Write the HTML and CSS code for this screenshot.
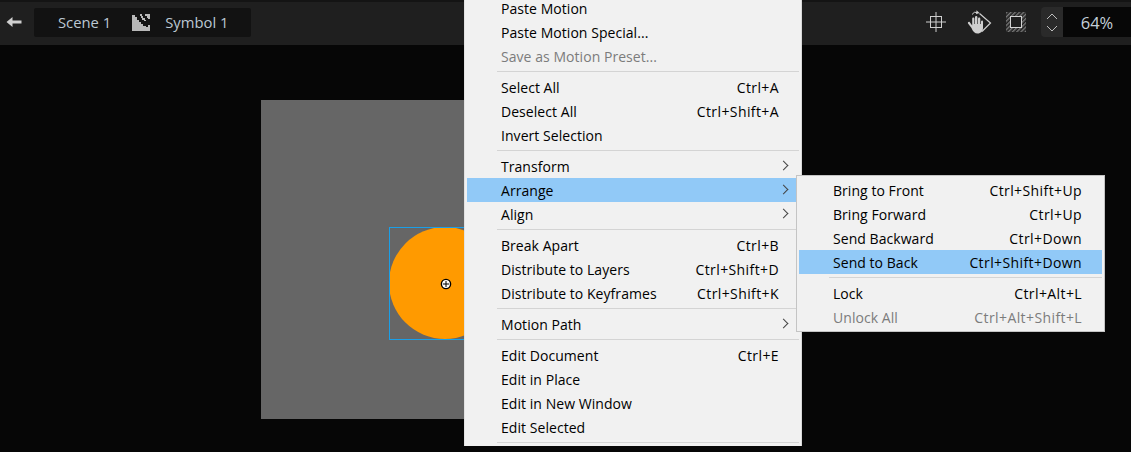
FILE: index.html
```html
<!DOCTYPE html>
<html lang="en">
<head>
<meta charset="utf-8">
<title>Symbol 1</title>
<link rel="stylesheet" href="styles.css">
</head>
<body>
<div class="app">
  <header class="topbar">
    <svg class="back" width="16" height="12" viewBox="0 0 16 12"><path d="M0.5 6 L6.5 1 V4.6 H15.5 V7.4 H6.5 V11 Z" fill="#cfcfcf"/></svg>
    <nav class="crumbs">
      <span class="crumb">Scene 1</span>
      <svg class="symbol" width="18" height="18" viewBox="0 0 18 18"><path d="M0 2 H3 V4 H5 V7 H7 V9 H9 V11 H11 V13 H14 V14 H16 V12 H18 V18 H0 Z" fill="#b8b8b8"/><path d="M8 1 H10 V3 H11 V5 H13 V7 H14 V8 H12 V7 H10 V5 H9 V3 H8 Z M13 1 H18 V6 H16 V5 H15 V3 H13 Z" fill="#b8b8b8"/></svg>
      <span class="crumb">Symbol 1</span>
    </nav>
    <div class="tools">
      <svg width="20" height="20" viewBox="0 0 20 20" fill="none" stroke="#cfcfcf"><rect x="4.5" y="4.5" width="11" height="11"/><path d="M10 0V20M0 10H20"/></svg>
      <svg class="hand" width="26" height="24" viewBox="0 0 26 24"><path d="M13.5 3.5 L24.5 13 L16 21.5" fill="none" stroke="#cfcfcf" stroke-width="1.2"/><path d="M2 13.5 L5.5 18 C6.5 21.5 9 23.5 11.5 23.5 C15 23.5 17 21 17 18 V11.5 C17 10 15.2 10 15 11.5 V14 L14.3 14 V8.5 C14.2 7 12.2 7 12 8.5 V14 H11.4 V7 C11.2 5.5 9.2 5.5 9 7 V14 H8.4 V8.5 C8.3 7 6.3 7 6.2 8.5 V15.5 L3.8 12.2 C3 11.2 1.4 12.3 2 13.5 Z" fill="#cfcfcf"/><path d="M6 4.5 A4.5 4.5 0 0 1 11.5 2.5" fill="none" stroke="#cfcfcf"/><path d="M10.5 0.3 L13.5 3 L10 4.3 Z" fill="#cfcfcf"/></svg>
      <svg width="20" height="20" viewBox="0 0 20 20"><defs><pattern id="hatch" width="3" height="3" patternUnits="userSpaceOnUse" patternTransform="rotate(-45)"><rect width="3" height="1.4" fill="#7a7a7a"/></pattern></defs><rect width="20" height="20" fill="url(#hatch)"/><rect x="4.5" y="4.5" width="11" height="11" fill="#1f1f1f" stroke="#d4d4d4"/></svg>
      <div class="zoomer">
        <div class="stepper">
          <svg width="12" height="7" viewBox="0 0 12 7" fill="none" stroke="#bdbdbd"><path d="M1 6 L6 1 L11 6"/></svg>
          <svg width="12" height="7" viewBox="0 0 12 7" fill="none" stroke="#bdbdbd"><path d="M1 1 L6 6 L11 1"/></svg>
        </div>
        <div class="zoomval">64%</div>
      </div>
    </div>
  </header>
  <main class="canvas">
    <div class="stage"></div>
    <div class="circle"></div>
    <div class="selbox"></div>
    <svg class="reg" width="12" height="12" viewBox="0 0 12 12"><circle cx="6" cy="6" r="4.6" fill="#fff" stroke="#000" stroke-width="1.4"/><path d="M6 3V9M3 6H9" stroke="#000"/></svg>
  </main>

  <div class="menu main-menu">
    <div class="item"><span>Paste Motion</span></div>
    <div class="item"><span>Paste Motion Special...</span></div>
    <div class="item off"><span>Save as Motion Preset...</span></div>
    <div class="sep"></div>
    <div class="item"><span>Select All</span><span class="key">Ctrl+A</span></div>
    <div class="item"><span>Deselect All</span><span class="key">Ctrl+Shift+A</span></div>
    <div class="item"><span>Invert Selection</span></div>
    <div class="sep"></div>
    <div class="item sub"><span>Transform</span></div>
    <div class="item sub hot"><span>Arrange</span></div>
    <div class="item sub"><span>Align</span></div>
    <div class="sep"></div>
    <div class="item"><span>Break Apart</span><span class="key">Ctrl+B</span></div>
    <div class="item"><span>Distribute to Layers</span><span class="key">Ctrl+Shift+D</span></div>
    <div class="item"><span>Distribute to Keyframes</span><span class="key">Ctrl+Shift+K</span></div>
    <div class="sep"></div>
    <div class="item sub"><span>Motion Path</span></div>
    <div class="sep"></div>
    <div class="item"><span>Edit Document</span><span class="key">Ctrl+E</span></div>
    <div class="item"><span>Edit in Place</span></div>
    <div class="item"><span>Edit in New Window</span></div>
    <div class="item"><span>Edit Selected</span></div>
    <div class="sep"></div>
  </div>

  <div class="menu sub-menu">
    <div class="item"><span>Bring to Front</span><span class="key">Ctrl+Shift+Up</span></div>
    <div class="item"><span>Bring Forward</span><span class="key">Ctrl+Up</span></div>
    <div class="item"><span>Send Backward</span><span class="key">Ctrl+Down</span></div>
    <div class="item hot"><span>Send to Back</span><span class="key">Ctrl+Shift+Down</span></div>
    <div class="sep"></div>
    <div class="item"><span>Lock</span><span class="key">Ctrl+Alt+L</span></div>
    <div class="item off"><span>Unlock All</span><span class="key">Ctrl+Alt+Shift+L</span></div>
  </div>
</div>
</body>
</html>
```

FILE: styles.css
```css
* { box-sizing: border-box; }
html, body { margin: 0; padding: 0; }
body { width: 1131px; height: 452px; overflow: hidden; background: #060606; font-family: "Open Sans", "Noto Sans", sans-serif; }
.app { position: relative; width: 1131px; height: 452px; overflow: hidden; display: flex; flex-direction: column; }

.topbar { height: 45px; flex: none; background: #1f1f1f; border-top: 2px solid #141414; display: flex; align-items: center; padding-left: 6px; padding-bottom: 3px; }
.back { flex: none; margin-right: 12px; }
.crumbs { width: 217px; height: 29px; background: #121212; border-radius: 2px; display: flex; align-items: center; padding-left: 24px; gap: 21px; }
.crumb { font-size: 14.8px; color: #bcc8d2; }
.symbol { flex: none; margin: 0 -6px 0 0; }
.tools { margin-left: auto; display: flex; align-items: center; }
.tools > svg:nth-child(1) { margin-right: 20px; }
.tools > .hand { margin-right: 14px; }
.tools > svg:nth-child(3) { margin-right: 15px; }
.zoomer { display: flex; height: 30px; }
.stepper { width: 22px; background: #2a2a2a; border-radius: 4px 0 0 4px; display: flex; flex-direction: column; align-items: center; justify-content: space-around; padding: 3px 0; }
.zoomval { width: 68px; background: #070707; color: #c4d0da; font-size: 16.5px; display: flex; align-items: center; justify-content: center; }

.canvas { flex: 1; position: relative; background: #060606; }
.stage { position: absolute; left: 261px; top: 55px; width: 300px; height: 319px; background: #666; }
.circle { position: absolute; left: 389px; top: 182px; width: 112px; height: 112px; border-radius: 50%; background: #ff9a00; }
.selbox { position: absolute; left: 389px; top: 182px; width: 112px; height: 113px; border: 1px solid #1a9fe8; }
.reg { position: absolute; left: 439.5px; top: 232.5px; }

.menu { position: absolute; background: #f1f1f1; color: #000; font-size: 14px; letter-spacing: 0.05px; }
.main-menu { left: 464px; top: -4px; width: 338px; padding: 0 2px; border-left: 1px solid #e2e2e2; border-right: 1px solid #d8d8d8; }
.sub-menu { left: 796px; top: 175px; width: 309px; height: 157px; padding: 2px 2px 0; border: 1px solid #c4c4c4; }
.item { height: 24px; display: flex; align-items: center; justify-content: space-between; padding: 0 20px 0 34px; white-space: nowrap; position: relative; }
.key { letter-spacing: 0.4px; }
.item.off { color: #7c7c7c; }
.item.hot { background: #91c9f7; }
.item.sub::after { content: ""; position: absolute; right: 12px; top: 8px; width: 6px; height: 6px; border-top: 1px solid #444; border-right: 1px solid #444; transform: rotate(45deg); }
.sep { height: 1px; margin: 3px 0 3px 30px; background: #d4d4d4; }
```
